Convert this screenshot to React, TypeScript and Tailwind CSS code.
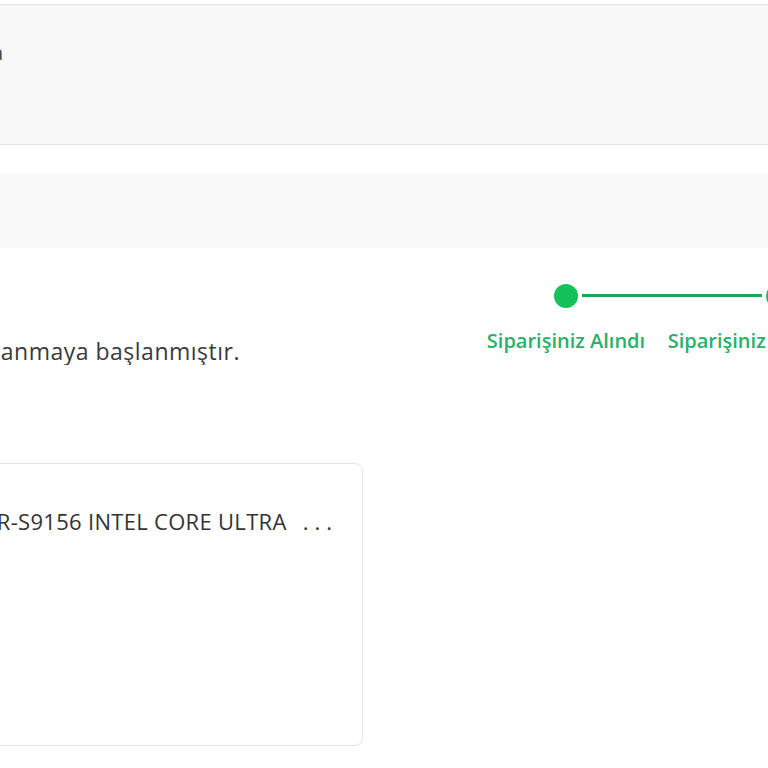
import React from "react";

const steps = ["Siparişiniz Alındı", "Siparişiniz Hazırlanıyor", "Kargoya Verildi"];

function Stepper() {
  return (
    <div className="flex">
      {steps.map((label, i) => (
        <div key={label} className="w-[212px] shrink-0 flex flex-col items-center">
          <div className="relative h-[24px] w-full flex justify-center">
            <div className="w-[24px] h-[24px] rounded-full bg-[#13c25a]" />
            {i < steps.length - 1 && (
              <div className="absolute left-[122px] top-[10px] w-[180px] h-[3px] bg-[#1ea552]" />
            )}
          </div>
          <p className="mt-[20px] text-[20px] font-semibold text-[#2bb06a] whitespace-nowrap leading-[26px]">
            {label}
          </p>
        </div>
      ))}
    </div>
  );
}

function App() {
  return (
    <div
      className="w-[768px] h-[768px] overflow-hidden bg-white text-[#333]"
      style={{ fontFamily: "'Open Sans', 'Noto Sans', sans-serif" }}
    >
      <div className="pt-[4px]">
        <div className="h-[141px] bg-[#f8f8f8] border-y border-[#e3e3e3] overflow-hidden">
          <div className="w-[3px] mt-[34px] flex justify-end overflow-hidden">
            <p className="shrink-0 text-[20px] text-[#444] whitespace-nowrap leading-[28px]">Sipariş Detayına</p>
          </div>
        </div>
        <div className="mt-[28px] h-[75px] bg-[#f9f9f9]" />
      </div>

      <div className="flex justify-between mt-[36px]">
        <div className="pt-[53px] w-[240px] flex justify-end overflow-hidden">
          <p className="shrink-0 text-[23px] text-[#3a3a3a] whitespace-nowrap leading-[28px] tracking-[0.5px]">
            Siparişiniz hazırlanmaya başlanmıştır.
          </p>
        </div>
        <div className="mr-[-328px] ml-auto">
          <Stepper />
        </div>
      </div>

      <div className="mt-[98px] -ml-[20px] w-[383px] h-[283px] border border-[#e6e6e6] rounded-[8px] overflow-hidden">
        <div className="mt-[43px] w-[357px] flex justify-end overflow-hidden">
          <p className="shrink-0 text-[22px] text-[#333] whitespace-nowrap leading-[28px] tracking-[0.3px]">
            MONSTER ABRA A5 V21.1.3 / TR-S9156 INTEL CORE ULTRA
            <span className="ml-[16px] tracking-[6px]">...</span>
          </p>
        </div>
      </div>
    </div>
  );
}

export default App;
